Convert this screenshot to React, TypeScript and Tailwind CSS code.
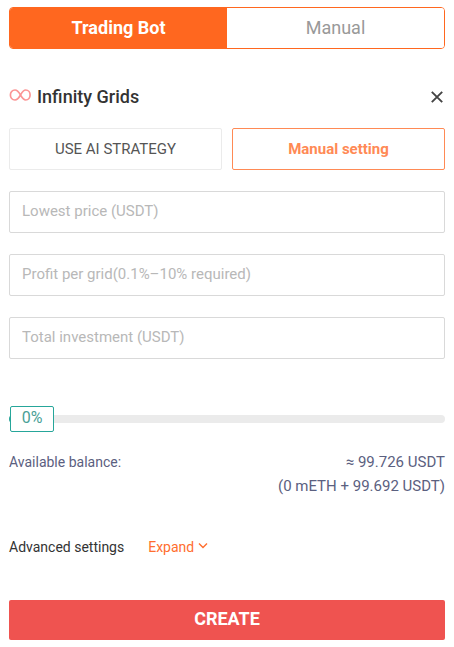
import { useState } from "react";

const fields = [
    { id: "lowestPrice", label: "Lowest price (USDT)" },
    { id: "profitPerGrid", label: "Profit per grid(0.1%–10% required)" },
    { id: "totalInvestment", label: "Total investment (USDT)" },
];

function InfinityIcon() {
    return (
        <svg className="h-5 w-[22px] shrink-0" viewBox="0 0 22 20" fill="none" stroke="#fb9494" strokeWidth="1.7" aria-hidden="true">
            <path d="M11.500 8C9.800 5 8.500 3 6 3C3.200 3 1.400 5.200 1.400 8S3.200 13 6 13C8.500 13 9.800 11 11.500 8S14.200 3 16.700 3C19.400 3 21.100 5.200 21.100 8S19.400 13 16.700 13C14.200 13 13.200 11 11.500 8Z" />
        </svg>
    );
}

function PercentSlider() {
    const [percent, setPercent] = useState(0);

    return (
        <div className="relative flex h-[26px] items-center">
            <input
                id="percent"
                type="range"
                min={0}
                max={100}
                value={percent}
                aria-label="Investment percent"
                onChange={(e) => setPercent(Number(e.target.value))}
                className="h-2 w-full cursor-pointer appearance-none rounded bg-[#ebebeb] [&::-webkit-slider-thumb]:h-2 [&::-webkit-slider-thumb]:w-10 [&::-webkit-slider-thumb]:appearance-none [&::-webkit-slider-thumb]:rounded [&::-webkit-slider-thumb]:bg-[#26a69a]"
            />
            {/* Value badge rides on top of the thumb */}
            <output
                htmlFor="percent"
                className="pointer-events-none absolute top-0 flex h-[26px] w-11 items-center justify-center rounded-xs border border-[#26a69a] bg-white pb-0.5 text-base text-[#4a9f96]"
                style={{ left: `calc((100% - 45px) * ${percent / 100} + 1px)` }}
            >
                {percent}%
            </output>
        </div>
    );
}

export default function App() {
    const [tab, setTab] = useState<'bot' | 'manual'>('bot');
    const [mode, setMode] = useState<'ai' | 'manual'>('manual');
    const [values, setValues] = useState<Record<string, string>>({});
    const [expanded, setExpanded] = useState(false);

    const tabClass = (active: boolean) =>
        active ? 'bg-[#ff671f] font-bold text-white' : 'bg-white text-[#999999]';
    const modeClass = (active: boolean) =>
        active ? 'border-[#ff8a55] font-bold text-[#ff8a55]' : 'border-[#ebebeb] text-[#555555]';

    return (
        <main className="min-h-screen bg-white px-[9px] pt-[7px] pb-[7px] font-['Roboto',sans-serif] text-[15px]">
            <div className="flex h-[42px] overflow-hidden rounded border border-[#ff671f] text-lg">
                <button type="button" onClick={() => setTab('bot')} className={`flex-1 ${tabClass(tab === 'bot')}`}>
                    Trading Bot
                </button>
                <button type="button" onClick={() => setTab('manual')} className={`flex-1 ${tabClass(tab === 'manual')}`}>
                    Manual
                </button>
            </div>

            <div className="mt-9 flex h-6 items-center justify-between">
                <div className="flex items-center gap-1.5">
                    <InfinityIcon />
                    <h2 className="text-lg font-medium text-[#333333]">Infinity Grids</h2>
                </div>
                <button type="button" aria-label="Close" className="px-0.5 text-[#444444]">
                    <svg className="h-3 w-3" viewBox="0 0 12 12" fill="none" stroke="currentColor" strokeWidth="1.9" aria-hidden="true">
                        <path d="M0.800 0.800 11.200 11.200M11.200 0.800 0.800 11.200" />
                    </svg>
                </button>
            </div>

            <div className="mt-[19px] grid grid-cols-2 gap-2.5">
                <button type="button" onClick={() => setMode('ai')} className={`h-[42px] rounded-xs border ${modeClass(mode === 'ai')}`}>
                    USE AI STRATEGY
                </button>
                <button type="button" onClick={() => setMode('manual')} className={`h-[42px] rounded-xs border ${modeClass(mode === 'manual')}`}>
                    Manual setting
                </button>
            </div>

            <form className="mt-[21px]" onSubmit={(e) => e.preventDefault()}>
                <div className="flex flex-col gap-[21px]">
                    {fields.map((field) => (
                        <input
                            key={field.id}
                            id={field.id}
                            type="text"
                            inputMode="decimal"
                            aria-label={field.label}
                            placeholder={field.label}
                            value={values[field.id] ?? ''}
                            onChange={(e) => setValues({ ...values, [field.id]: e.target.value })}
                            className="h-[42px] w-full rounded-xs border border-[#d9d9d9] px-3 pb-0.5 text-[#333333] outline-none placeholder:text-[#b8b8b8] focus:border-[#ff8a55]"
                        />
                    ))}
                </div>

                <div className="mt-[47px]">
                    <PercentSlider />
                </div>

                <div className="mt-[18px] flex justify-between leading-6 text-[#5b6080]">
                    <span className="text-sm leading-6">Available balance:</span>
                    <div className="text-right">
                        <p>≈ 99.726 USDT</p>
                        <p>(0 mETH + 99.692 USDT)</p>
                    </div>
                </div>

                <div className="mt-[37px] flex h-6 items-center gap-6 text-sm">
                    <span className="text-[#333333]">Advanced settings</span>
                    <button
                        type="button"
                        aria-expanded={expanded}
                        onClick={() => setExpanded(!expanded)}
                        className="flex items-center gap-1 text-[#ff6e2e]"
                    >
                        Expand
                        <svg className="h-2.5 w-2.5" viewBox="0 0 10 10" fill="none" stroke="currentColor" strokeWidth="1.400" aria-hidden="true">
                            <path d="M1 1.500 5 5.500 9 1.500" />
                        </svg>
                    </button>
                </div>

                <button type="submit" className="mt-[41px] h-10 w-full rounded-xs bg-[#ef5350] pb-0.5 text-lg font-bold text-white">
                    CREATE
                </button>
            </form>
        </main>
    );
}
